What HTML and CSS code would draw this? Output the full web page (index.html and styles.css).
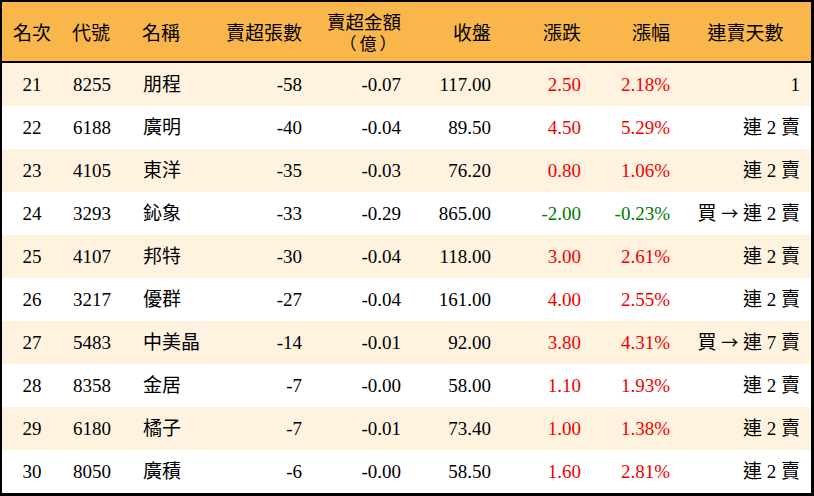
FILE: index.html
```html
<!DOCTYPE html>
<html lang="zh-Hant">
<head>
<meta charset="utf-8">
<title>賣超排行</title>
<link rel="stylesheet" href="styles.css">
</head>
<body>
<table class="rank">
  <colgroup>
    <col class="c1"><col class="c2"><col class="c3"><col class="c4"><col class="c5">
    <col class="c6"><col class="c7"><col class="c8"><col class="c9">
  </colgroup>
  <thead>
    <tr>
      <th class="ctr">名次</th>
      <th class="lft">代號</th>
      <th class="lft">名稱</th>
      <th class="rgt">賣超張數</th>
      <th class="rgt amt"><span class="line">賣超金額</span><span class="unit">（億）</span></th>
      <th class="rgt">收盤</th>
      <th class="rgt">漲跌</th>
      <th class="rgt">漲幅</th>
      <th class="ctr last">連賣天數</th>
    </tr>
  </thead>
  <tbody>
    <tr class="odd"><td class="ctr">21</td><td class="lft">8255</td><td class="lft">朋程</td><td class="rgt">-58</td><td class="rgt">-0.07</td><td class="rgt">117.00</td><td class="rgt up">2.50</td><td class="rgt up">2.18%</td><td class="rgt days">1</td></tr>
    <tr><td class="ctr">22</td><td class="lft">6188</td><td class="lft">廣明</td><td class="rgt">-40</td><td class="rgt">-0.04</td><td class="rgt">89.50</td><td class="rgt up">4.50</td><td class="rgt up">5.29%</td><td class="rgt days">連 2 賣</td></tr>
    <tr class="odd"><td class="ctr">23</td><td class="lft">4105</td><td class="lft">東洋</td><td class="rgt">-35</td><td class="rgt">-0.03</td><td class="rgt">76.20</td><td class="rgt up">0.80</td><td class="rgt up">1.06%</td><td class="rgt days">連 2 賣</td></tr>
    <tr><td class="ctr">24</td><td class="lft">3293</td><td class="lft">鈊象</td><td class="rgt">-33</td><td class="rgt">-0.29</td><td class="rgt">865.00</td><td class="rgt down">-2.00</td><td class="rgt down">-0.23%</td><td class="rgt days">買 <span class="arrow">→</span> 連 2 賣</td></tr>
    <tr class="odd"><td class="ctr">25</td><td class="lft">4107</td><td class="lft">邦特</td><td class="rgt">-30</td><td class="rgt">-0.04</td><td class="rgt">118.00</td><td class="rgt up">3.00</td><td class="rgt up">2.61%</td><td class="rgt days">連 2 賣</td></tr>
    <tr><td class="ctr">26</td><td class="lft">3217</td><td class="lft">優群</td><td class="rgt">-27</td><td class="rgt">-0.04</td><td class="rgt">161.00</td><td class="rgt up">4.00</td><td class="rgt up">2.55%</td><td class="rgt days">連 2 賣</td></tr>
    <tr class="odd"><td class="ctr">27</td><td class="lft">5483</td><td class="lft">中美晶</td><td class="rgt">-14</td><td class="rgt">-0.01</td><td class="rgt">92.00</td><td class="rgt up">3.80</td><td class="rgt up">4.31%</td><td class="rgt days">買 <span class="arrow">→</span> 連 7 賣</td></tr>
    <tr><td class="ctr">28</td><td class="lft">8358</td><td class="lft">金居</td><td class="rgt">-7</td><td class="rgt">-0.00</td><td class="rgt">58.00</td><td class="rgt up">1.10</td><td class="rgt up">1.93%</td><td class="rgt days">連 2 賣</td></tr>
    <tr class="odd"><td class="ctr">29</td><td class="lft">6180</td><td class="lft">橘子</td><td class="rgt">-7</td><td class="rgt">-0.01</td><td class="rgt">73.40</td><td class="rgt up">1.00</td><td class="rgt up">1.38%</td><td class="rgt days">連 2 賣</td></tr>
    <tr><td class="ctr">30</td><td class="lft">8050</td><td class="lft">廣積</td><td class="rgt">-6</td><td class="rgt">-0.00</td><td class="rgt">58.50</td><td class="rgt up">1.60</td><td class="rgt up">2.81%</td><td class="rgt days">連 2 賣</td></tr>
  </tbody>
</table>
</body>
</html>
```

FILE: styles.css
```css
* { box-sizing: border-box; }
html, body { margin: 0; padding: 0; background: #ffffff; }
body {
  font-family: "Liberation Serif", "Noto Sans CJK TC", serif;
  font-size: 19px;
  color: #000000;
}
.rank {
  width: 814px;
  table-layout: fixed;
  border-collapse: separate;
  border-spacing: 0;
  border-style: solid;
  border-color: #000000;
  border-width: 2px 3px 3px 2px;
}
.c1 { width: 60px; }
.c2 { width: 70px; }
.c3 { width: 68px; }
.c4 { width: 112px; }
.c5 { width: 99px; }
.c6 { width: 90px; }
.c7 { width: 90px; }
.c8 { width: 89px; }
.c9 { width: 131px; }

.rank th {
  height: 61px;
  background: #f9b74b;
  border-bottom: 2px solid #000000;
  font-weight: normal;
  font-family: "Noto Sans CJK TC", sans-serif;
  font-size: 19px;
  line-height: 22px;
  padding: 0 10px;
  vertical-align: middle;
  white-space: nowrap;
}
.rank th.amt { padding-top: 1px; }
.line { display: block; height: 22px; line-height: 22px; font-size: 18.5px; }
.unit { display: block; height: 22px; line-height: 22px; font-size: 17px; letter-spacing: 3px; text-align: center; padding-left: 16px; }

.rank td {
  height: 43px;
  padding: 0 10px;
  vertical-align: middle;
  white-space: nowrap;
  line-height: 22px;
}
.rank tr.odd td { background: #fff3e0; }

.ctr { text-align: center; }
.lft { text-align: left; }
.rgt { text-align: right; }
.rank th.ctr, .rank td.ctr { padding: 0; }
.rank td.lft { padding-left: 11px; }
.rank td.days { padding-right: 11px; }
.arrow { font-family: "Noto Sans CJK TC", sans-serif; font-size: 17px; }

.up { color: #f20000; }
.down { color: #007a00; }
```
